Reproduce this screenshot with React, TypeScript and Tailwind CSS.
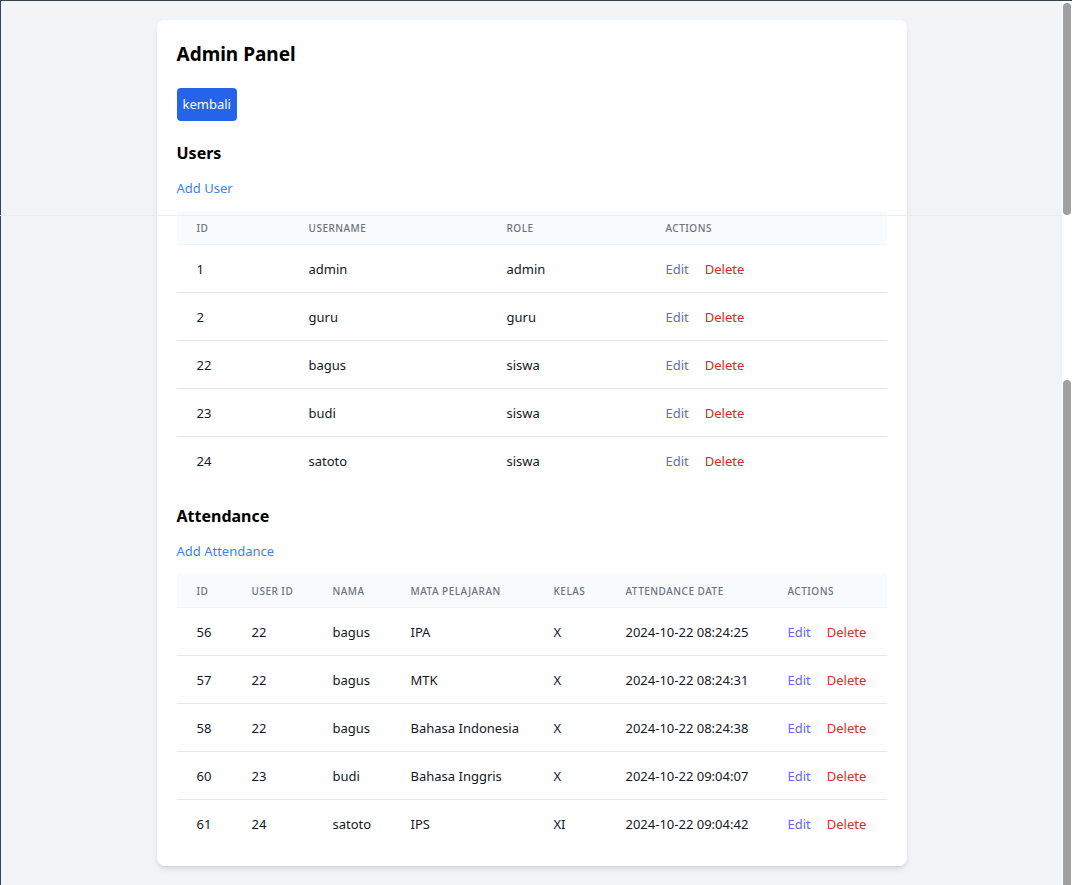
import React from 'react';

type User = { id: number; username: string; role: string };
type Attendance = { id: number; userId: number; nama: string; mapel: string; kelas: string; date: string };

const users: User[] = [
  { id: 1, username: 'admin', role: 'admin' },
  { id: 2, username: 'guru', role: 'guru' },
  { id: 22, username: 'bagus', role: 'siswa' },
  { id: 23, username: 'budi', role: 'siswa' },
  { id: 24, username: 'satoto', role: 'siswa' },
];

const attendance: Attendance[] = [
  { id: 56, userId: 22, nama: 'bagus', mapel: 'IPA', kelas: 'X', date: '2024-10-22 08:24:25' },
  { id: 57, userId: 22, nama: 'bagus', mapel: 'MTK', kelas: 'X', date: '2024-10-22 08:24:31' },
  { id: 58, userId: 22, nama: 'bagus', mapel: 'Bahasa Indonesia', kelas: 'X', date: '2024-10-22 08:24:38' },
  { id: 60, userId: 23, nama: 'budi', mapel: 'Bahasa Inggris', kelas: 'X', date: '2024-10-22 09:04:07' },
  { id: 61, userId: 24, nama: 'satoto', mapel: 'IPS', kelas: 'XI', date: '2024-10-22 09:04:42' },
];

const th = 'px-5 py-[8.5px] text-left text-[10px] font-medium uppercase tracking-wider text-[#6b7280] leading-4 whitespace-nowrap';
const td = 'px-5 py-[13.5px] text-[13px] leading-5 text-[#111827] whitespace-nowrap';

function Actions() {
  return (
    <td className={td}>
      <button className="text-[#6366f1] mr-4">Edit</button>
      <button className="text-[#dc2626]">Delete</button>
    </td>
  );
}

export default function App() {
  return (
    <div
      className="relative flex h-[885px] overflow-hidden"
      style={{ fontFamily: '"Noto Sans", "Open Sans", sans-serif' }}
    >
      <div className="flex-1 bg-[#f3f4f6] border-t border-l border-gray-700 pt-[19px]">
        <div className="w-[750px] mx-auto bg-white rounded-lg shadow-md px-5 pt-5 pb-[19px]">
          <h1 className="text-[19px] leading-7 font-bold text-black mb-5">Admin Panel</h1>
          <button className="h-[33px] px-[6px] bg-[#2563eb] text-white text-[13px] rounded">kembali</button>

          {/* Users */}
          <h2 className="text-base leading-7 font-bold text-black mt-[18px]">Users</h2>
          <a className="block text-[13px] leading-5 text-[#3b82f6] mt-[11px] mb-[13px]">Add User</a>
          <table className="w-full table-fixed border-collapse">
            <thead className="bg-[#f9fafb]">
              <tr className="border-b border-gray-100">
                <th className={`${th} w-[112px]`}>ID</th>
                <th className={`${th} w-[198px]`}>Username</th>
                <th className={`${th} w-[159px]`}>Role</th>
                <th className={th}>Actions</th>
              </tr>
            </thead>
            <tbody>
              {users.map((u, i) => (
                <tr key={u.id} className={i < users.length - 1 ? 'border-b border-[#e5e7eb]' : ''}>
                  <td className={td}>{u.id}</td>
                  <td className={td}>{u.username}</td>
                  <td className={td}>{u.role}</td>
                  <Actions />
                </tr>
              ))}
            </tbody>
          </table>

          {/* Attendance */}
          <h2 className="text-base leading-7 font-bold text-black mt-[18px]">Attendance</h2>
          <a className="block text-[13px] leading-5 text-[#3b82f6] mt-[11px] mb-[13px]">Add Attendance</a>
          <table className="w-full table-fixed border-collapse">
            <thead className="bg-[#f9fafb]">
              <tr className="border-b border-gray-100">
                <th className={`${th} w-[55px]`}>ID</th>
                <th className={`${th} w-[81px]`}>User ID</th>
                <th className={`${th} w-[78px]`}>Nama</th>
                <th className={`${th} w-[143px]`}>Mata Pelajaran</th>
                <th className={`${th} w-[72px]`}>Kelas</th>
                <th className={`${th} w-[162px]`}>Attendance Date</th>
                <th className={th}>Actions</th>
              </tr>
            </thead>
            <tbody>
              {attendance.map((a, i) => (
                <tr key={a.id} className={i < attendance.length - 1 ? 'border-b border-[#e5e7eb]' : ''}>
                  <td className={td}>{a.id}</td>
                  <td className={td}>{a.userId}</td>
                  <td className={td}>{a.nama}</td>
                  <td className={td}>{a.mapel}</td>
                  <td className={td}>{a.kelas}</td>
                  <td className={td}>{a.date}</td>
                  <Actions />
                </tr>
              ))}
            </tbody>
          </table>
        </div>
      </div>

      {/* scrollbar */}
      <div className="w-[10px] bg-white flex flex-col items-center border-t border-gray-700">
        <div className="w-[8px] h-[212px] mt-[2px] rounded-full bg-[#a0a0a0]" />
        <div className="flex-1" />
        <div className="w-[8px] h-[505px] rounded-t-full bg-[#a0a0a0]" />
      </div>

      {/* seam line across the capture */}
      <div className="absolute left-0 right-[10px] top-[215px] h-px bg-gray-200/80" />
    </div>
  );
}
